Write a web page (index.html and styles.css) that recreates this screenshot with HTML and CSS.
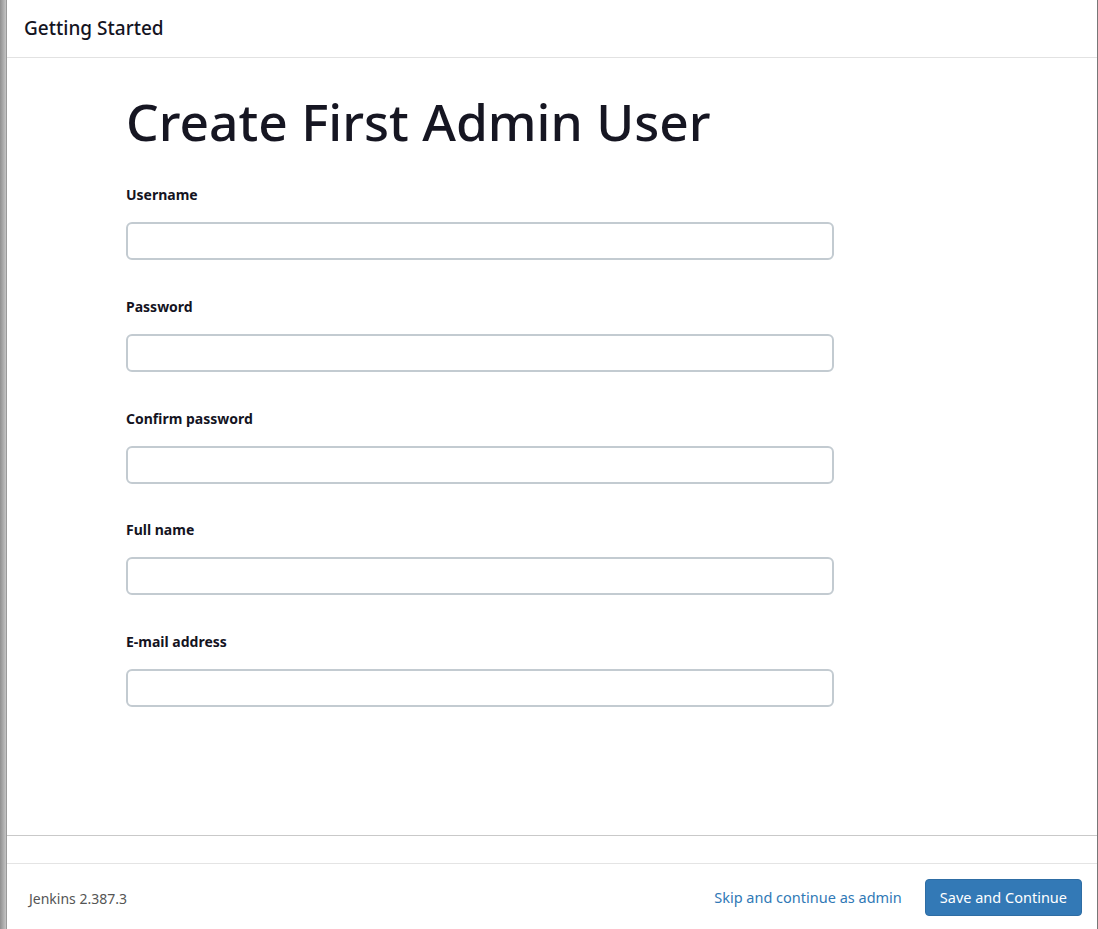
FILE: index.html
```html
<!DOCTYPE html>
<html lang="en">
<head>
<meta charset="utf-8">
<title>Getting Started</title>
<link rel="stylesheet" href="styles.css">
</head>
<body>
<div class="page">
  <div class="backdrop-edge"></div>
  <div class="dialog">
    <div class="dialog-header">
      <h4 class="dialog-title">Getting Started</h4>
    </div>
    <div class="dialog-body">
      <h1 class="form-title">Create First Admin User</h1>
      <form class="admin-form">
        <div class="field">
          <label class="field-label" for="username">Username</label>
          <input class="field-input" id="username" type="text">
        </div>
        <div class="field">
          <label class="field-label" for="password1">Password</label>
          <input class="field-input" id="password1" type="password">
        </div>
        <div class="field">
          <label class="field-label" for="password2">Confirm password</label>
          <input class="field-input" id="password2" type="password">
        </div>
        <div class="field">
          <label class="field-label" for="fullname">Full name</label>
          <input class="field-input" id="fullname" type="text">
        </div>
        <div class="field">
          <label class="field-label" for="email">E-mail address</label>
          <input class="field-input" id="email" type="text">
        </div>
      </form>
    </div>
    <div class="dialog-spacer"></div>
    <div class="dialog-footer">
      <span class="version">Jenkins 2.387.3</span>
      <div class="actions">
        <a class="skip-link" href="#">Skip and continue as admin</a>
        <button class="btn-primary" type="button">Save and Continue</button>
      </div>
    </div>
  </div>
</div>
</body>
</html>
```
FILE: styles.css
```css
* { box-sizing: border-box; }
html, body { margin: 0; padding: 0; height: 100%; }
body {
  font-family: "Noto Sans", "Open Sans", sans-serif;
  color: #14141f;
  background: #fff;
}
.page {
  display: flex;
  height: 929px;
  overflow: hidden;
}
.backdrop-edge {
  width: 7px;
  flex: none;
  background: linear-gradient(to right, #8f8f8f, #c4c4c4);
  border-right: 1px solid #9a9a9a;
}
.dialog {
  flex: 1;
  display: flex;
  flex-direction: column;
  background: #fff;
  border-right: 1px solid #777;
}
.dialog-header {
  height: 58px;
  flex: none;
  border-bottom: 1px solid #e2e2e2;
  display: flex;
  align-items: center;
  padding-left: 17px;
}
.dialog-title {
  margin: 0;
  font-size: 19px;
  font-weight: 500;
  color: #14141f;
  padding-bottom: 1px;
}
.dialog-body {
  flex: 1;
  border-bottom: 1px solid #c9c9c9;
  padding: 29px 0 0 119px;
}
.form-title {
  margin: 0 0 30px 0;
  font-size: 51.5px;
  font-weight: 500;
  line-height: 68px;
  color: #161622;
}
.admin-form {
  display: flex;
  flex-direction: column;
  gap: 36.75px;
  width: 708px;
}
.field {
  display: flex;
  flex-direction: column;
}
.field-label {
  font-size: 14px;
  font-weight: 700;
  line-height: 20px;
  margin-bottom: 17px;
  color: #14141f;
}
.field-input {
  height: 38px;
  width: 708px;
  border: 2px solid #c3cbd1;
  border-radius: 6px;
  background: #fff;
  font: inherit;
}
.dialog-spacer {
  height: 28px;
  flex: none;
  border-bottom: 1px solid #e4e4e4;
}
.dialog-footer {
  height: 65px;
  flex: none;
  display: flex;
  align-items: center;
  justify-content: space-between;
  padding: 0 15px 0 22px;
}
.version {
  font-size: 14px;
  color: #555;
  padding-top: 3px;
}
.actions {
  display: flex;
  align-items: center;
  gap: 23px;
}
.skip-link {
  font-size: 14.5px;
  color: #3079b6;
  text-decoration: none;
}
.btn-primary {
  height: 37px;
  margin-top: 1px;
  padding: 0 14px;
  background: #3379b6;
  color: #fff;
  border: 1px solid #2e6da4;
  border-radius: 4px;
  font: inherit;
  font-size: 14.5px;
}
```
